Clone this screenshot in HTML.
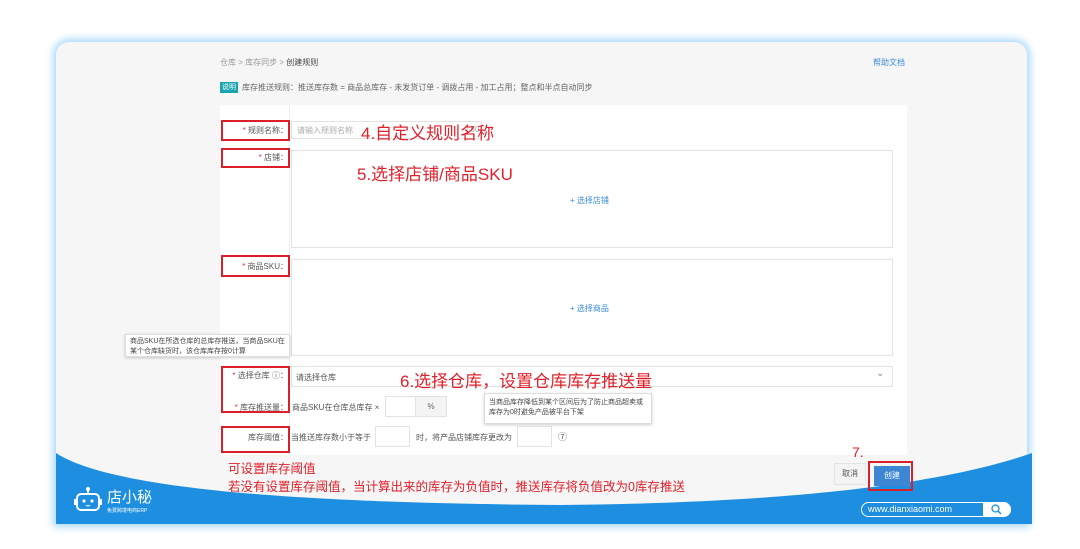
<!DOCTYPE html>
<html><head><meta charset="utf-8">
<style>
*{margin:0;padding:0;box-sizing:border-box}
body{width:1080px;height:549px;background:#fff;position:relative;overflow:hidden;font-family:"Liberation Sans","Noto Sans CJK SC",sans-serif;font-size:8px;color:#666}
.a{position:absolute}
.frame{left:56px;top:42px;width:971px;height:482px;background:#f6f6f6;border-radius:13px 13px 0 0;box-shadow:0 0 8px 3px #a9d8fa}
.rb{position:absolute;border:2px solid #d9202a}
.red{color:#e0212b;position:absolute;white-space:nowrap}
.lab{position:absolute;text-align:right;width:66px;left:222px;font-size:8px;color:#555}
.box{position:absolute;border:1px solid #e2e2e2;background:#fff}
.lnk{position:absolute;color:#3a8bd8;font-size:8px}
.tip{position:absolute;background:#fff;border:1px solid #ddd;box-shadow:0 1px 3px rgba(0,0,0,.2);font-size:7px;color:#444;line-height:10px;padding:2px 4px}
</style></head><body>
<div class="a frame"></div>
<svg class="a" style="left:0;top:0" width="1080" height="549"><path d="M56,453 C100,482 240,503 560,505 C800,503 950,482 1032,453 L1032,524 L56,524 Z" fill="#1e8fe0"/></svg>
<div class="a" style="left:220px;top:57px;color:#999">仓库 &gt; 库存同步 &gt; <span style="color:#444">创建规则</span></div>
<div class="lnk" style="left:873px;top:57px">帮助文档</div>
<div class="a" style="left:220px;top:82px;background:#19a4b0;color:#fff;font-size:7px;padding:0 2px;line-height:11px">说明</div>
<div class="a" style="left:242px;top:82px;color:#666;line-height:11px">库存推送规则：推送库存数 = 商品总库存 - 未发货订单 - 调拨占用 - 加工占用；整点和半点自动同步</div>
<div class="a" style="left:220px;top:105px;width:687px;height:350px;background:#fff"></div>
<div class="a" style="left:220px;top:105px;width:70px;height:350px;background:#fff;border-right:1px solid #eee"></div>

<div class="lab" style="top:125px"><span style="color:#e33">* </span>规则名称：</div>
<div class="box" style="left:291px;top:121px;width:191px;height:18px"></div>
<div class="a" style="left:297px;top:125px;color:#aaa">请输入规则名称</div>
<div class="a" style="left:466px;top:125px;color:#aaa">/ 50</div>
<div class="red" style="left:361px;top:119px;font-size:17px">4.自定义规则名称</div>
<div class="rb" style="left:221px;top:120px;width:69px;height:21px"></div>

<div class="lab" style="top:152px"><span style="color:#e33">* </span>店铺：</div>
<div class="box" style="left:291px;top:150px;width:602px;height:98px"></div>
<div class="lnk" style="left:570px;top:195px">+ 选择店铺</div>
<div class="red" style="left:357px;top:160px;font-size:17px">5.选择店铺/商品SKU</div>
<div class="rb" style="left:221px;top:148px;width:69px;height:20px"></div>

<div class="lab" style="top:261px"><span style="color:#e33">* </span>商品SKU：</div>
<div class="box" style="left:291px;top:259px;width:602px;height:97px"></div>
<div class="lnk" style="left:570px;top:303px">+ 选择商品</div>
<div class="rb" style="left:221px;top:255px;width:69px;height:22px"></div>

<div class="tip" style="left:125px;top:334px;width:165px;height:23px">商品SKU在所选仓库的总库存推送，当商品SKU在某个仓库缺货时，该仓库库存按0计算</div>

<div class="lab" style="top:370px"><span style="color:#e33">* </span>选择仓库 ⓘ：</div>
<div class="box" style="left:291px;top:366px;width:602px;height:21px"></div>
<div class="a" style="left:296px;top:372px;color:#555">请选择仓库</div>
<div class="a" style="left:876px;top:368px;color:#888;font-size:10px">⌄</div>
<div class="red" style="left:400px;top:367px;font-size:17px">6.选择仓库，设置仓库库存推送量</div>

<div class="lab" style="top:402px"><span style="color:#e33">* </span>库存推送量：</div>
<div class="a" style="left:292px;top:402px;color:#555">商品SKU在仓库总库存 ×</div>
<div class="box" style="left:385px;top:396px;width:62px;height:21px"></div>
<div class="a" style="left:415px;top:396px;width:32px;height:21px;background:#f4f4f4;border:1px solid #e2e2e2;text-align:center;line-height:19px;color:#666">%</div>
<div class="tip" style="left:484px;top:393px;width:168px;height:31px;padding-top:4px">当商品库存降低到某个区间后为了防止商品超卖或库存为0时避免产品被平台下架</div>
<div class="rb" style="left:221px;top:366px;width:69px;height:47px"></div>

<div class="lab" style="top:432px">库存阈值：</div>
<div class="a" style="left:291px;top:432px;color:#555">当推送库存数小于等于</div>
<div class="box" style="left:375px;top:426px;width:35px;height:21px"></div>
<div class="a" style="left:416px;top:432px;color:#555">时，将产品店铺库存更改为</div>
<div class="box" style="left:517px;top:426px;width:35px;height:21px"></div>
<div class="a" style="left:558px;top:430px;color:#666;font-size:9px">⑦</div>
<div class="rb" style="left:221px;top:426px;width:69px;height:27px"></div>

<div class="red" style="left:228px;top:458px;font-size:12.5px">可设置库存阈值</div>
<div class="red" style="left:228px;top:476px;font-size:12.5px">若没有设置库存阈值，当计算出来的库存为负值时，推送库存将负值改为0库存推送</div>

<div class="a" style="left:834px;top:463px;width:32px;height:22px;background:#f4f4f4;border:1px solid #e4e4e4;text-align:center;line-height:20px;color:#555">取消</div>
<div class="a" style="left:874px;top:466px;width:36px;height:20px;background:#3d86d3;color:#fff;text-align:center;line-height:20px">创建</div>
<div class="rb" style="left:868px;top:461px;width:45px;height:30px"></div>
<div class="red" style="left:852px;top:444px;font-size:14px">7.</div>

<svg class="a" style="left:72px;top:486px" width="32" height="26"><line x1="16" y1="3" x2="16" y2="8" stroke="#fff" stroke-width="2"/><circle cx="16" cy="3" r="2" fill="#fff"/><rect x="5" y="8" width="22" height="16" rx="4" fill="none" stroke="#fff" stroke-width="2"/><rect x="2" y="13" width="3" height="6" fill="#fff"/><rect x="27" y="13" width="3" height="6" fill="#fff"/><circle cx="12" cy="15" r="1.6" fill="#fff"/><circle cx="20" cy="15" r="1.6" fill="#fff"/><path d="M14 19 Q16 21 18 19" stroke="#fff" fill="none"/></svg>
<div class="a" style="left:107px;top:490px;color:#fff;font-size:15px;line-height:16px">店小秘</div>
<div class="a" style="left:107px;top:507px;color:#fff;font-size:5px">免费跨境电商ERP</div>

<div class="a" style="left:861px;top:502px;width:150px;height:15px;border:1px solid #fff;border-radius:8px"></div>
<div class="a" style="left:868px;top:503px;color:#fff;font-size:9px;line-height:13px">www.dianxiaomi.com</div>
<div class="a" style="left:983px;top:502px;width:28px;height:15px;background:#fff;border-radius:0 8px 8px 0"></div>
<svg class="a" style="left:990px;top:503px" width="14" height="13"><circle cx="5.5" cy="5.5" r="3.5" stroke="#1e8fe0" stroke-width="1.3" fill="none"/><line x1="8" y1="8" x2="11" y2="11" stroke="#1e8fe0" stroke-width="1.5"/></svg>
</body></html>
